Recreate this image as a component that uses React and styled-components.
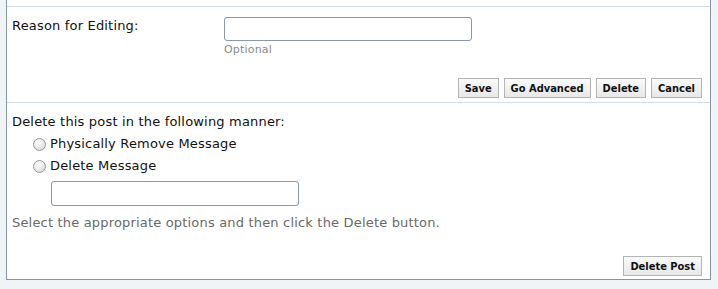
import React from 'react'
import styled, { createGlobalStyle } from 'styled-components'

const Global = createGlobalStyle`
	body {
		margin: 0;
		background: #f1f4f7;
		font-family: "DejaVu Sans", Verdana, sans-serif;
		font-size: 13px;
		letter-spacing: 0.18px;
		color: #111;
	}
`

const Panel = styled.div`
	margin-left: 6px;
	width: 703px;
	padding-top: 6px;
	background: #fff;
	border: 1px solid #8796a4;
	border-top: none;
`

const Section = styled.div`
	border-top: 1px solid #d3dee7;
	padding: ${props => props.pad || '10px 8px 0 5px'};
`

const FieldRow = styled.div`
	display: flex;
	align-items: flex-start;
`

const Label = styled.div`
	width: 212px;
	padding-top: 1px;
	line-height: 16px;
`

const FieldCol = styled.div`
	display: flex;
	flex-direction: column;
`

const TextBox = styled.input`
	box-sizing: border-box;
	width: 248px;
	height: ${props => props.h || 24}px;
	margin: ${props => props.m || 0};
	border: 1px solid #8b98a5;
	border-radius: 3px;
	background: #fff;
	outline: none;
`

const Hint = styled.div`
	margin-top: 2px;
	font-size: 11px;
	color: #8a8a8a;
`

const ButtonBar = styled.div`
	display: flex;
	justify-content: flex-end;
	gap: 5px;
	margin-top: ${props => props.top || 0}px;
	padding-bottom: ${props => props.bottom || 0}px;
`

const Button = styled.button`
	height: 20px;
	padding: 0 6px;
	font-family: "DejaVu Sans Condensed", Tahoma, sans-serif;
	font-weight: bold;
	font-size: 11px;
	letter-spacing: 0;
	color: #111;
	background: linear-gradient(#fafafa, #e8e8e8);
	border: 1px solid #b4b4b4;
	border-radius: 0;
`

const Heading = styled.div`
	line-height: 16px;
	margin-top: 1px;
`

const RadioRow = styled.label`
	display: flex;
	align-items: center;
	gap: 4px;
	margin: 6px 0 0 21px;
	line-height: 16px;
`

const Radio = styled.span`
	width: 11px;
	height: 11px;
	border-radius: 50%;
	border: 1px solid #9a9a9a;
	background: radial-gradient(circle at 40% 35%, #fff 0%, #e4e4e4 60%, #c8c8c8 100%);
`

const Note = styled.div`
	margin-top: 9px;
	line-height: 16px;
	color: #6a6a6a;
`

export default function App () {
	return (
		<>
			<Global />
			<Panel>
				<Section pad="10px 8px 4px 5px">
					<FieldRow>
						<Label>Reason for Editing:</Label>
						<FieldCol>
							<TextBox type="text" />
							<Hint>Optional</Hint>
						</FieldCol>
					</FieldRow>
					<ButtonBar top={22}>
						<Button>Save</Button>
						<Button>Go Advanced</Button>
						<Button>Delete</Button>
						<Button>Cancel</Button>
					</ButtonBar>
				</Section>
				<Section pad="10px 8px 3px 5px">
					<Heading>Delete this post in the following manner:</Heading>
					<RadioRow><Radio />Physically Remove Message</RadioRow>
					<RadioRow><Radio />Delete Message</RadioRow>
					<TextBox type="text" h={25} m="7px 0 0 39px" />
					<Note>Select the appropriate options and then click the Delete button.</Note>
					<ButtonBar top={25}>
						<Button>Delete Post</Button>
					</ButtonBar>
				</Section>
			</Panel>
		</>
	)
}
